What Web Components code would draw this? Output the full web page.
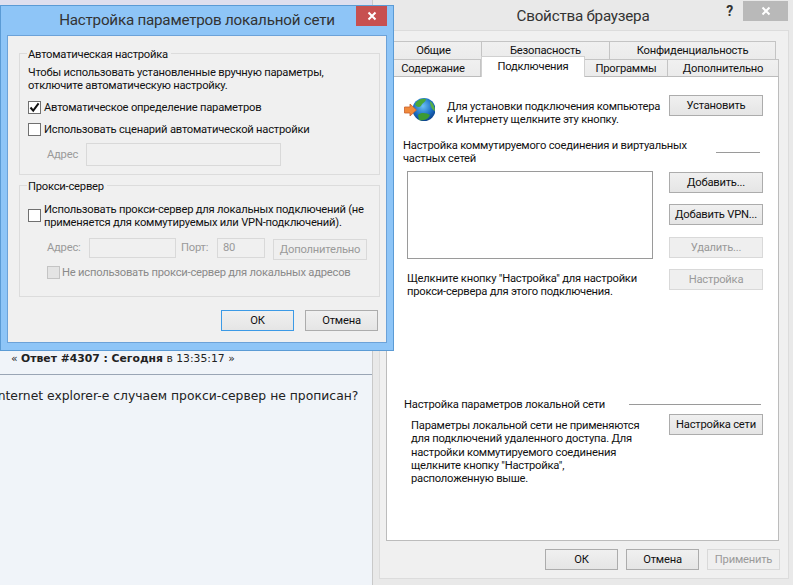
<!DOCTYPE html>
<html>
<head>
<meta charset="utf-8">
<style>
html, body { margin: 0; height: 100%; overflow: hidden; }
body { font: 11.2px/13px Roboto, "Noto Sans", sans-serif; letter-spacing: -0.22px; color: #111; background: #f0f4f9; }
</style>
</head>
<body>
<desk-top>
  <forum-page slot="page"></forum-page>
  <browser-props slot="props"></browser-props>
  <lan-dialog slot="lan"></lan-dialog>
</desk-top>

<script>
const CLOSE_X = '<svg width="10" height="10" viewBox="0 0 10 10"><path d="M1.5 1.5 L8.5 8.5 M8.5 1.5 L1.5 8.5" stroke="#fff" stroke-width="2"/></svg>';

class DeskTop extends HTMLElement {
    connectedCallback() {
        this.attachShadow({ mode: 'open' });
        this.shadowRoot.innerHTML = `
            <style>
                :host { display: block; position: relative; width: 793px; height: 585px; overflow: hidden; }
                ::slotted([slot=page]) { position: absolute; left: 0; top: 0; }
                ::slotted([slot=props]) { position: absolute; left: 372px; top: 0; }
                ::slotted([slot=lan]) { position: absolute; left: 0; top: 5px; }
            </style>
            <slot name="page"></slot><slot name="props"></slot><slot name="lan"></slot>
        `;
    }
}

class WinButton extends HTMLElement {
    connectedCallback() {
        this.attachShadow({ mode: 'open' });
        this.shadowRoot.innerHTML = `
            <style>
                :host { display: block; flex: none; box-sizing: border-box; width: var(--w, 94px); height: 21px;
                    border: 1px solid #acacac; background: linear-gradient(#f0f0f0, #e5e5e5);
                    color: #111; text-align: center; line-height: 20px; white-space: nowrap; }
                :host([disabled]) { border-color: #d9d9d9; background: #efefef; color: #9a9a9a; }
                :host([primary]) { border-color: #3c9ae6; }
            </style>
            <slot></slot>
        `;
    }
}

class WinCheck extends HTMLElement {
    connectedCallback() {
        this.attachShadow({ mode: 'open' });
        const tick = this.hasAttribute('checked')
            ? '<svg width="11" height="11" viewBox="0 0 11 11"><path d="M1.5 5.5 L4.2 8.6 L9.6 1.4" fill="none" stroke="#111" stroke-width="2"/></svg>'
            : '';
        this.shadowRoot.innerHTML = `
            <style>
                :host { display: flex; align-items: flex-start; gap: 3px; white-space: nowrap; }
                .box { box-sizing: border-box; flex: none; width: 13px; height: 13px; border: 1px solid #707070; background: #fff;
                    display: flex; align-items: center; justify-content: center; margin-top: var(--box-top, 0); }
                :host([disabled]) .box { background: #e4e4e4; border-color: #c4c4c4; }
                :host([disabled]) { color: #8a8a8a; gap: 2px; }
            </style>
            <span class="box">${tick}</span><span><slot></slot></span>
        `;
    }
}

class WinGroup extends HTMLElement {
    connectedCallback() {
        this.attachShadow({ mode: 'open' });
        this.shadowRoot.innerHTML = `
            <style>
                :host { display: block; position: relative; box-sizing: border-box; border: 1px solid #dcdcdc; }
                .cap { position: absolute; left: 7px; top: -7px; padding: 0 3px 0 1px; background: #f0f0f0; line-height: 15px; }
            </style>
            <span class="cap">${this.getAttribute('caption')}</span>
            <slot></slot>
        `;
    }
}

class LanDialog extends HTMLElement {
    connectedCallback() {
        this.attachShadow({ mode: 'open' });
        this.shadowRoot.innerHTML = `
            <style>
                :host { display: block; box-sizing: border-box; width: 394px; height: 346px; background: #8ec5f7;
                    border: 1px solid #5b9bd5; padding: 0 6px; color: #111; }
                .title { position: relative; height: 29px; font-size: 15.2px; line-height: 29px; text-align: center; color: #333; }
                .close { position: absolute; right: 0; top: 0; width: 31px; height: 20px; background: #c75050;
                    display: flex; align-items: center; justify-content: center; }
                .client { box-sizing: border-box; height: 308px; background: #f0f0f0; border: 1px solid #6ca2d8; padding: 17px 6px 0 11px; }
                .text { margin: 12px 0 9px 8px; white-space: nowrap; }
                .auto { height: 122px; }
                .proxy { height: 112px; margin-top: 10px; padding-top: 17px; }
                .row { display: flex; align-items: flex-start; margin-left: 27px; color: #9a9a9a; }
                .row .lbl { line-height: 23px; flex: none; }
                .field { box-sizing: border-box; flex: none; border: 1px solid #d9d9d9; background: #f0f0f0; }
                .foot { display: flex; justify-content: flex-end; gap: 11px; margin: 13px 2px 0 0; }
            </style>
            <div class="title">Настройка параметров локальной сети
                <span class="close">${CLOSE_X}</span>
            </div>
            <div class="client">
                <win-group class="auto" caption="Автоматическая настройка">
                    <div class="text">Чтобы использовать установленные вручную параметры,<br>отключите автоматическую настройку.</div>
                    <win-check style="margin-left:8px" checked>Автоматическое определение параметров</win-check>
                    <win-check style="margin:9px 0 0 8px">Использовать сценарий автоматической настройки</win-check>
                    <div class="row" style="margin-top:7px">
                        <span class="lbl" style="width:39px">Адрес</span>
                        <span class="field" style="width:195px;height:23px"></span>
                    </div>
                </win-group>
                <win-group class="proxy" caption="Прокси-сервер">
                    <win-check style="--box-top:6px;margin-left:8px">Использовать прокси-сервер для локальных подключений (не<br>применяется для коммутируемых или VPN-подключений).</win-check>
                    <div class="row" style="margin-top:9px">
                        <span class="lbl" style="width:42px;line-height:20px">Адрес:</span>
                        <span class="field" style="width:87px;height:20px"></span>
                        <span class="lbl" style="width:36px;margin-left:5px;line-height:20px">Порт:</span>
                        <span class="field" style="width:48px;height:20px;padding-left:5px;line-height:18px">80</span>
                        <win-button disabled style="margin:1px 0 0 8px">Дополнительно</win-button>
                    </div>
                    <win-check disabled style="margin:6px 0 0 27px">Не использовать прокси-сервер для локальных адресов</win-check>
                </win-group>
                <div class="foot">
                    <win-button primary style="--w:73px">ОК</win-button>
                    <win-button style="--w:73px">Отмена</win-button>
                </div>
            </div>
        `;
    }
}

class BrowserProps extends HTMLElement {
    connectedCallback() {
        this.attachShadow({ mode: 'open' });
        const tab = (t, w, cls = '') => `<span class="tab ${cls}" style="width:${w}px">${t}</span>`;
        this.shadowRoot.innerHTML = `
            <style>
                :host { display: block; box-sizing: border-box; width: 421px; height: 585px; background: #e9e9e9;
                    border-left: 1px solid #c9c9c9; color: #111; }
                .title { position: relative; height: 30px; font-size: 15.2px; line-height: 32px; text-align: center; color: #333; }
                .help { position: absolute; right: 60px; top: 0; font-weight: 700; font-size: 14px; line-height: 22px; }
                .close { position: absolute; right: 5px; top: 1px; width: 45px; height: 20px; background: #b9b9b9;
                    display: flex; align-items: center; justify-content: center; }
                .client { box-sizing: border-box; width: 410px; height: 549px; margin-left: 6px; background: #f0f0f0;
                    border: 1px solid #dcdcdc; padding: 10px 0 0 6px; }
                .tr { display: flex; height: 18px; }
                .tr.two { height: 17px; }
                .tab { box-sizing: border-box; height: 18px; text-align: center; line-height: 17px; background: linear-gradient(#f0f0f0, #ebebeb);
                    border: 1px solid #c4c4c4; border-bottom: 0; border-left: 0; white-space: nowrap; }
                .tr.two .tab { height: 17px; line-height: 17px; }
                .tr.two .tab.on { background: #fff; height: 21px; margin-top: -3px; position: relative; z-index: 1; line-height: 20px; border-color: #d0d0d0; border-left: 1px solid #d0d0d0; }
                .page { box-sizing: border-box; width: 393px; height: 465px; background: #fff; border: 1px solid #bcbcbc; }
                .install { display: flex; box-sizing: border-box; height: 62px; padding: 18px 15px 0 17px; }
                .install .t { margin: 5px 0 0 12px; flex: 1; white-space: nowrap; }
                .sect { display: flex; justify-content: space-between; align-items: flex-start; padding: 0 18px 0 16px; height: 32px; white-space: nowrap; }
                .rule { height: 1px; background: #9a9a9a; }
                .mid { display: flex; justify-content: space-between; box-sizing: border-box; padding: 0 15px 0 20px; height: 227px; }
                .list { box-sizing: border-box; width: 246px; height: 88px; border: 1px solid #9a9a9a; background: #fff; }
                .mid .t { margin-top: 13px; white-space: nowrap; }
                .btns { display: flex; flex-direction: column; gap: 11px; margin-top: 1px; }
                .lan { display: flex; justify-content: space-between; align-items: center; padding: 0 17px; height: 13px; white-space: nowrap; }
                .lanbody { display: flex; justify-content: space-between; padding: 0 15px 0 24px; margin-top: 3px; }
                .lanbody .t { line-height: 13.3px; padding-top: 5px; white-space: nowrap; }
                .foot { display: flex; justify-content: flex-end; gap: 8px; padding-top: 8px; width: 394px; }
            </style>
            <div class="title">Свойства браузера
                <span class="help">?</span>
                <span class="close">${CLOSE_X}</span>
            </div>
            <div class="client">
                <div class="tr">${tab('Общие', 96)}${tab('Безопасность', 128)}${tab('Конфиденциальность', 166)}</div>
                <div class="tr two">${tab('Содержание', 95)}${tab('Подключения', 104, 'on')}${tab('Программы', 83)}${tab('Дополнительно', 111)}</div>
                <div class="page">
                    <div class="install">
                        <net-globe></net-globe>
                        <div class="t">Для установки подключения компьютера<br>к Интернету щелкните эту кнопку.</div>
                        <win-button>Установить</win-button>
                    </div>
                    <div class="sect"><div>Настройка коммутируемого соединения и виртуальных<br>частных сетей</div><div class="rule" style="width:44px;margin-top:13px"></div></div>
                    <div class="mid">
                        <div><div class="list"></div><div class="t">Щелкните кнопку "Настройка" для настройки<br>прокси-сервера для этого подключения.</div></div>
                        <div class="btns">
                            <win-button>Добавить...</win-button>
                            <win-button>Добавить VPN...</win-button>
                            <win-button disabled style="margin-top:1px">Удалить...</win-button>
                            <win-button disabled>Настройка</win-button>
                        </div>
                    </div>
                    <div class="lan"><span>Настройка параметров локальной сети</span><div class="rule" style="width:132px"></div></div>
                    <div class="lanbody">
                        <div class="t">Параметры локальной сети не применяются<br>для подключений удаленного доступа. Для<br>настройки коммутируемого соединения<br>щелкните кнопку "Настройка",<br>расположенную выше.</div>
                        <win-button>Настройка сети</win-button>
                    </div>
                </div>
                <div class="foot">
                    <win-button style="--w:73px">ОК</win-button>
                    <win-button style="--w:73px">Отмена</win-button>
                    <win-button disabled style="--w:73px">Применить</win-button>
                </div>
            </div>
        `;
    }
}

class NetGlobe extends HTMLElement {
    connectedCallback() {
        this.attachShadow({ mode: 'open' });
        this.shadowRoot.innerHTML = `
            <style>:host { display: block; flex: none; width: 31px; height: 26px; margin-top: 2px; }</style>
            <svg width="31" height="26" viewBox="0 0 31 26">
                <defs><radialGradient id="g" cx="0.45" cy="0.35" r="0.7"><stop offset="0" stop-color="#6cc0f5"/><stop offset="0.6" stop-color="#1b6fc4"/><stop offset="1" stop-color="#0b3a82"/></radialGradient></defs>
                <circle cx="20" cy="12.5" r="11.5" fill="url(#g)"/>
                <path d="M11 7 C13 3 18 1 22 2 C22 5 18 6 17 9 C15 11 12 10 11 7Z" fill="#4aa838"/>
                <path d="M14 18 C17 15 23 16 26 18 C24 23 18 24 15 23Z" fill="#3c9a34"/>
                <path d="M26 4 C29 6 31 10 31 14 C28 13 26 9 26 4Z" fill="#58b044"/>
                <path d="M0.5 10 H6 V7 L12.5 13 L6 19 V16 H0.5 Z" fill="#f08a3c" stroke="#c9602a" stroke-width="0.8"/>
            </svg>
        `;
    }
}

class ForumPage extends HTMLElement {
    connectedCallback() {
        this.attachShadow({ mode: 'open' });
        this.shadowRoot.innerHTML = `
            <style>
                :host { display: block; box-sizing: border-box; width: 372px; height: 585px; background: #f0f4f9;
                    font: 10.8px/15px "DejaVu Sans", sans-serif; letter-spacing: 0; color: #222; overflow: hidden; }
                .strip { height: 5px; background: #dfdfee; margin-bottom: 346px; }
                .meta { height: 23px; padding-left: 11px; border-bottom: 1px solid #9aa5b5; }
                .post { font-size: 12.36px; padding-top: 14px; margin-left: -6px; white-space: nowrap; }
            </style>
            <div class="strip"></div>
            <div class="meta">« <b>Ответ #4307 : Сегодня</b> в 13:35:17 »</div>
            <div class="post">Internet explorer-е случаем прокси-сервер не прописан?</div>
        `;
    }
}

customElements.define('desk-top', DeskTop);
customElements.define('win-button', WinButton);
customElements.define('win-check', WinCheck);
customElements.define('win-group', WinGroup);
customElements.define('net-globe', NetGlobe);
customElements.define('lan-dialog', LanDialog);
customElements.define('browser-props', BrowserProps);
customElements.define('forum-page', ForumPage);
</script>
</body>
</html>
